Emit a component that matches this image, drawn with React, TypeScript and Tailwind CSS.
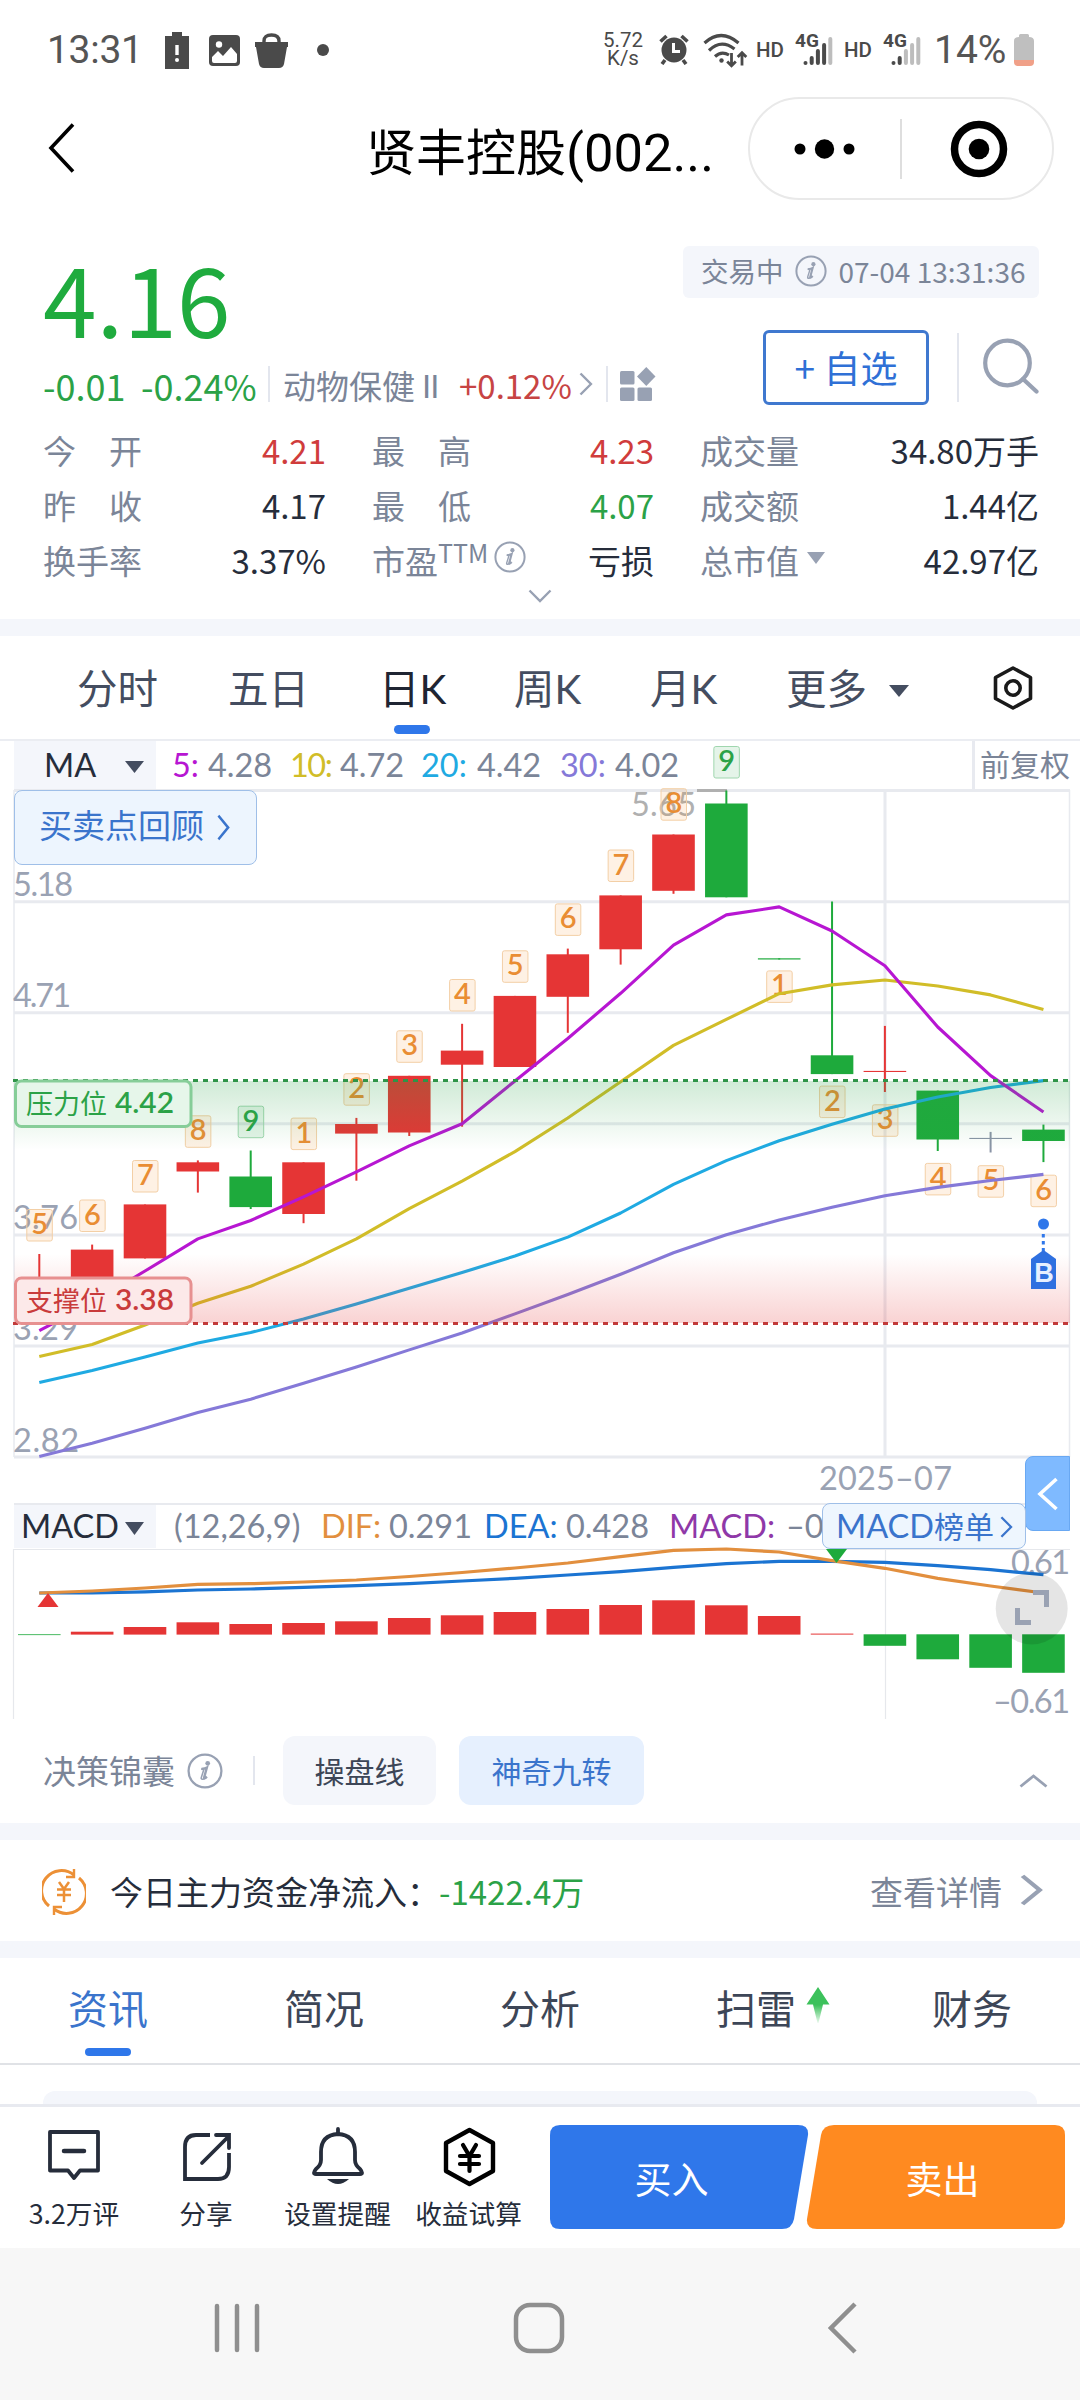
import type { ReactNode } from "react";

const UP = "#e53535";
const DOWN = "#1eaa3c";
const FLAT = "#8a94a6";

type Candle = {
  color: string;
  high: number;
  low: number;
  top: number;
  bottom: number;
  turn: string;
  turnY: number;
};

const candles: Candle[] = [
  { color: UP, high: 1254, low: 1300, top: 1290, bottom: 1300, turn: "5", turnY: 1209 },
  { color: UP, high: 1244.6, low: 1290, top: 1249.6, bottom: 1288, turn: "6", turnY: 1199.5 },
  { color: UP, high: 1204.4, low: 1258.4, top: 1204.4, bottom: 1258.4, turn: "7", turnY: 1160 },
  { color: UP, high: 1160.4, low: 1192.6, top: 1162.3, bottom: 1171.5, turn: "8", turnY: 1115.3 },
  { color: DOWN, high: 1150.5, low: 1209, top: 1176.5, bottom: 1207.1, turn: "9", turnY: 1105.7 },
  { color: UP, high: 1162.3, low: 1223.2, top: 1162.3, bottom: 1214, turn: "1", turnY: 1117.6 },
  { color: UP, high: 1117.9, low: 1180.7, top: 1124, bottom: 1133.6, turn: "2", turnY: 1073.2 },
  { color: UP, high: 1075.8, low: 1136, top: 1075.8, bottom: 1132.5, turn: "3", turnY: 1030.3 },
  { color: UP, high: 1023.8, low: 1126.7, top: 1050.6, bottom: 1064.7, turn: "4", turnY: 979 },
  { color: UP, high: 995.9, low: 1067, top: 995.9, bottom: 1067, turn: "5", turnY: 950.3 },
  { color: UP, high: 948.6, low: 1032.8, top: 954.3, bottom: 996.8, turn: "6", turnY: 903.4 },
  { color: UP, high: 895.4, low: 964.6, top: 895.4, bottom: 949.3, turn: "7", turnY: 849.5 },
  { color: UP, high: 834.5, low: 893.8, top: 834.5, bottom: 890.8, turn: "8", turnY: 788.2 },
  { color: DOWN, high: 790.5, low: 897.3, top: 803.5, bottom: 897.3, turn: "9", turnY: 746 },
  { color: DOWN, high: 958.3, low: 959.5, top: 958.3, bottom: 959.5, turn: "1", turnY: 970.4 },
  { color: DOWN, high: 901.5, low: 1074.1, top: 1055.3, bottom: 1074.1, turn: "2", turnY: 1085.6 },
  { color: UP, high: 1025.9, low: 1092, top: 1070.9, bottom: 1072, turn: "3", turnY: 1104.3 },
  { color: DOWN, high: 1090.6, low: 1151, top: 1090.6, bottom: 1139.5, turn: "4", turnY: 1162.9 },
  { color: FLAT, high: 1131.9, low: 1152.5, top: 1137.9, bottom: 1139, turn: "5", turnY: 1165.2 },
  { color: DOWN, high: 1124.6, low: 1162.1, top: 1129.6, bottom: 1141, turn: "6", turnY: 1174.7 },
];

const averages = [
  {
    color: "#8579d8",
    ys: [1456.6, 1443.2, 1428.3, 1412.6, 1399.2, 1383.2, 1367, 1349.9, 1333, 1313.9, 1294.5, 1274.3, 1252.8, 1234.8, 1219.9, 1207.3, 1195.8, 1187.4, 1180.5, 1174.4],
  },
  {
    color: "#1faae2",
    ys: [1382.4, 1370.5, 1357, 1343, 1332.6, 1318.9, 1303.9, 1288.2, 1272.6, 1256, 1237.1, 1213, 1184.3, 1160.6, 1140.7, 1124.2, 1108.9, 1097, 1087.5, 1080.6],
  },
  {
    color: "#d1bd28",
    ys: [1356.4, 1344.5, 1325, 1303.2, 1286.3, 1264.1, 1238.9, 1208.6, 1181.1, 1151.6, 1118, 1081.8, 1045.4, 1019.4, 993.7, 984.9, 980, 986, 994.9, 1009.4],
  },
  {
    color: "#b716d2",
    ys: [1330.7, 1303, 1271, 1238.9, 1220.5, 1196.8, 1171.9, 1145.9, 1123.7, 1081, 1038.5, 993.3, 945.1, 914.9, 906.9, 931, 965.8, 1027, 1075.6, 1112],
  },
];

const dea = [1593, 1593, 1591.8, 1590, 1589, 1587.3, 1585.7, 1583.7, 1581, 1578.3, 1575, 1571.7, 1567.3, 1563.7, 1561.3, 1561.3, 1562.3, 1565.7, 1569.7, 1574.7];
const dif = [1593, 1591, 1588, 1584.3, 1583.7, 1582, 1580, 1576.5, 1572.5, 1568, 1563, 1556.7, 1550.3, 1549, 1552, 1560.7, 1568.3, 1578.3, 1586, 1593];
const macdBars = [-0.8, 2.9, 7.6, 12.3, 10.6, 11.6, 13.3, 16.6, 19.3, 22.6, 25.6, 29.6, 34.3, 29.3, 18.6, 1, -11.5, -25, -33.5, -38.5];

const candleX = (i: number) => 39.3 + i * 52.85;
const toPoints = (ys: number[]) => ys.map((y, i) => `${candleX(i)},${y}`).join(" ");

function InfoIcon({ className }: { className: string }) {
  return (
    <svg className={className} viewBox="0 0 32 32" fill="none">
      <circle cx="16" cy="16" r="14.6" stroke="#98a1b3" strokeWidth="2" />
      <circle cx="18.4" cy="9.2" r="2.1" fill="#98a1b3" />
      <path d="M13 14.2c2-.4 3.5-.7 4.7-1.4l-2.5 9.1c-.2 1 .6 1 2.5-.9" stroke="#98a1b3" strokeWidth="2.1" />
      <path d="M12.6 14.3h2.5l-2.4 7.6c-.5 2 1.8 1.7 3.7.2" stroke="#98a1b3" strokeWidth="1.4" />
    </svg>
  );
}

function Caret({ className }: { className: string }) {
  return (
    <svg className={className} viewBox="0 0 20 13" preserveAspectRatio="none" fill="currentColor">
      <path d="M0 0h20L10 13z" />
    </svg>
  );
}

function Chevron({ className, width }: { className: string; width: number }) {
  return (
    <svg className={className} viewBox="0 0 14 26" preserveAspectRatio="none" fill="none" stroke="currentColor" strokeWidth={width}>
      <path d="M1.5 1.5 12 13 1.5 24.5" />
    </svg>
  );
}

function Signal({ strong }: { strong: number }) {
  return (
    <div className="relative h-9 w-10">
      <span className="absolute left-0 top-0 text-[19px] font-bold leading-5">4G</span>
      <svg className="absolute bottom-0 left-2 h-9 w-8" viewBox="0 0 32 36">
        {[4, 9, 16, 22, 28].map((h, i) => (
          <rect key={h} x={0.5 + i * 6.2} y={34 - h} width="4" height={h} rx="2" fill={i < strong ? "#4a4a4a" : "#bdbdbd"} />
        ))}
      </svg>
    </div>
  );
}

function StatusBar() {
  return (
    <div className="flex h-[97px] items-start pl-[47px] pr-[46px] font-['Roboto'] text-[#4a4a4a]">
      <div className="mt-[27px] w-[118px] text-[39px] leading-[46px] tracking-[-0.3px] text-[#555]">13:31</div>
      <svg className="mt-8 h-[37px] w-6" viewBox="0 0 24 37">
        <path d="M0 4h7V0h10v4h7v33H0z" fill="#4a4a4a" />
        <path d="M12 13v10" stroke="#fff" strokeWidth="3.4" />
        <circle cx="12" cy="28" r="2" fill="#fff" />
      </svg>
      <svg className="ml-5 mt-[35px] h-[31px] w-[31px]" viewBox="0 0 31 31">
        <rect width="31" height="31" rx="4" fill="#4a4a4a" />
        <circle cx="10" cy="9.5" r="3.2" fill="#fff" />
        <path d="M3 26v-4l6-6 5 5 8-9 6 7v7q0 2-2 2H5q-2 0-2-2z" fill="#fff" />
      </svg>
      <svg className="ml-[15px] mt-[33px] h-[35px] w-[33px]" viewBox="0 0 33 35">
        <path d="M9 11V8q0-6 7.5-6T24 8v3" fill="none" stroke="#4a4a4a" strokeWidth="3.4" />
        <path d="M0 9h33v5h-1l-3 17q-1 4-5 4H9q-4 0-5-4L1 14H0z" fill="#4a4a4a" />
      </svg>
      <span className="ml-[29px] mt-11 h-3 w-3 rounded-full bg-[#4a4a4a]" />
      <div className="flex-1" />
      <div className="mt-[31px] w-[42px] text-center text-[20.5px] leading-[18px]">
        5.72
        <br />
        K/s
      </div>
      <svg className="ml-[15px] mt-[34px] h-[31px] w-[30px]" viewBox="0 0 30 31">
        <circle cx="15" cy="16" r="12.5" fill="#4a4a4a" />
        <path d="M1.5 7.5 7.5 2M28.5 7.5 22.5 2M6 26l-3 4M24 26l3 4" stroke="#4a4a4a" strokeWidth="3.6" />
        <path d="M14.5 9v8.5H21" fill="none" stroke="#fff" strokeWidth="3" />
      </svg>
      <svg className="ml-[14px] mt-8 h-9 w-[45px]" viewBox="0 0 45 36" fill="none" stroke="#4a4a4a">
        <path d="M1.5 11q16.5-15 34 0M6 18.5q12-12 25.5-1.5M12 24.5q6.5-6 14-1.5" strokeWidth="3.2" />
        <circle cx="18.5" cy="28.5" r="2.2" fill="#4a4a4a" stroke="none" />
        <path d="M28.5 21v13M24.2 29.5l4.3 4.3 4.3-4.3M39 33.5V20.5M34.7 25l4.3-4.3 4.3 4.3" strokeWidth="2.8" />
      </svg>
      <span className="ml-2 mt-[38px] w-[39px] text-[20.5px] font-medium leading-6">HD</span>
      <div className="mt-[31px]">
        <Signal strong={4} />
      </div>
      <span className="ml-[9px] mt-[38px] w-[39px] text-[20.5px] font-medium leading-6">HD</span>
      <div className="mt-[31px]">
        <Signal strong={2} />
      </div>
      <span className="ml-[11px] mt-[27px] w-[80px] text-[39px] leading-[46px] text-[#555]">14%</span>
      <svg className="mt-[34px] h-8 w-5" viewBox="0 0 20 32">
        <path d="M5 3V1.5Q5 0 6.5 0h7Q15 0 15 1.5V3q5 0 5 4v20H0V7q0-4 5-4z" fill="#bfbfbf" />
        <path d="M0 26h20v2q0 4-4 4H4q-4 0-4-4z" fill="#f0a088" />
      </svg>
    </div>
  );
}

function TitleBar() {
  return (
    <div className="flex h-[149px] items-start pl-12 pr-[26px]">
      <svg className="mt-[26px] h-[50px] w-7" viewBox="0 0 28 50" fill="none" stroke="#000" strokeWidth="3.6">
        <path d="M25 1.5 3 25l22 23.5" />
      </svg>
      <h1 className="ml-[290px] mt-5 w-[382px] whitespace-nowrap font-['Roboto','Noto_Sans_CJK_SC',sans-serif] text-[50px] leading-[72px] text-black">
        贤丰控股<span className="text-[52.5px]">(002...</span>
      </h1>
      <div className="flex h-[103px] w-[306px] items-center rounded-full border-2 border-[#e9e9e9]">
        <svg className="ml-[43px] h-6 w-[66px]" viewBox="0 0 66 24">
          <circle cx="7" cy="12" r="5.5" />
          <circle cx="31.5" cy="12" r="9.7" />
          <circle cx="56" cy="12" r="5.5" />
        </svg>
        <span className="ml-[41px] h-[60px] w-0.5 bg-[#dedede]" />
        <svg className="ml-12 h-[58px] w-[58px]" viewBox="0 0 58 58">
          <circle cx="29" cy="29" r="24.5" fill="none" stroke="#000" strokeWidth="7.5" />
          <circle cx="29" cy="29" r="10.3" />
        </svg>
      </div>
    </div>
  );
}

function Quote() {
  return (
    <div className="flex h-[185px] justify-between pl-[43px] pr-[41px]">
      <div>
        <div className="mt-1 h-[101px] text-[96.5px] leading-[92px] text-[#1fab3e]">4.16</div>
        <div className="mt-[9px] flex h-[54px] items-center whitespace-nowrap text-[33px]">
          <span className="w-[98px] pb-[5px] text-[36px] text-[#2ba247]">-0.01</span>
          <span className="w-[127px] pb-[5px] text-[36px] text-[#2ba247]">-0.24%</span>
          <span className="-mt-1.5 h-9 w-0.5 bg-[#e3e6ee]" />
          <span className="ml-[13px] w-[139px] pb-0.5 text-[#7b8598]">动物保健</span>
          <span className="w-[39px] font-['Liberation_Sans'] tracking-[-1px] text-[#7b8598]">II</span>
          <span className="-ml-0.5 w-[120px] pb-0.5 text-[#c74444]">+0.12%</span>
          <Chevron className="-mt-1.5 h-6 w-[14px] text-[#98a1b3]" width={2.4} />
          <span className="-mt-1.5 ml-[13px] h-9 w-0.5 bg-[#e3e6ee]" />
          <svg className="-mt-1.5 ml-3 h-9 w-9" viewBox="0 0 36 36" fill="#98a1b3">
            <rect x="0" y="5" width="14.5" height="13.5" rx="1.5" />
            <rect x="0" y="21.5" width="14.5" height="13.5" rx="1.5" />
            <rect x="17.5" y="21.5" width="14.5" height="13.5" rx="1.5" />
            <path d="m26.3 1 9.2 9.5-9.2 9.5-9.3-9.5z" />
          </svg>
        </div>
      </div>
      <div className="flex flex-col items-end">
        <div className="flex h-[52px] w-[356px] items-center whitespace-nowrap rounded-md bg-[#f4f6fb] pb-0.5 pl-[18px] text-[27.5px] text-[#7b8598]">
          交易中
          <InfoIcon className="ml-[11px] h-8 w-8" />
          <span className="ml-3 text-[28px]">07-04 13:31:36</span>
        </div>
        <div className="mt-8 flex items-center">
          <button className="h-[75px] w-[166px] whitespace-nowrap rounded-md border-[3px] border-[#3f78cf] text-[37px] leading-[69px] text-[#2f70d6]" type="button">
            + 自选
          </button>
          <span className="ml-7 h-[69px] w-0.5 bg-[#e3e6ee]" />
          <svg className="-mt-1 ml-[22px] h-[60px] w-[58px]" viewBox="0 0 58 60" fill="none" stroke="#98a1b3" strokeWidth="4.2">
            <circle cx="26.5" cy="27" r="22.3" />
            <path d="m42 43 13.5 12.5" strokeLinecap="round" />
          </svg>
        </div>
      </div>
    </div>
  );
}

function Stat({ label, value, color = "text-[#262d3b]" }: { label: ReactNode; value: string; color?: string }) {
  return (
    <div className="flex h-[55px] items-center justify-between whitespace-nowrap">
      <span className="flex items-center whitespace-pre text-[#7b8598]">{label}</span>
      <span className={color}>{value}</span>
    </div>
  );
}

function Stats() {
  return (
    <div className="flex h-[188px] flex-col">
      <div className="-mt-[9px] grid grid-cols-[283px_282px_339px] gap-x-[46px] pl-[43px] text-[33px] leading-[48px]">
        <Stat label="今　开" value="4.21" color="text-[#d03c3c]" />
        <Stat label="最　高" value="4.23" color="text-[#d03c3c]" />
        <Stat label="成交量" value="34.80万手" />
        <Stat label="昨　收" value="4.17" />
        <Stat label="最　低" value="4.07" color="text-[#2ba247]" />
        <Stat label="成交额" value="1.44亿" />
        <Stat label="换手率" value="3.37%" />
        <Stat
          label={
            <>
              市盈
              <span className="-mt-4 text-[25px] leading-8">TTM</span>
              <InfoIcon className="-mt-1.5 ml-1.5 h-8 w-8" />
            </>
          }
          value="亏损"
        />
        <Stat
          label={
            <>
              总市值
              <Caret className="-mt-1 ml-2 h-3 w-[18px] text-[#98a1b3]" />
            </>
          }
          value="42.97亿"
        />
      </div>
      <svg className="mx-auto mt-px h-4 w-6" viewBox="0 0 24 16" fill="none" stroke="#98a1b3" strokeWidth="2.4">
        <path d="m1.5 2.5 10.5 10.5 10.5-10.5" />
      </svg>
    </div>
  );
}

function PeriodTabs() {
  return (
    <div className="flex h-[105px] items-start whitespace-nowrap border-b-2 border-[#ebedf2] pl-[77px] pt-6 font-['Lato','Noto_Sans_CJK_SC',sans-serif] text-[40.5px] leading-[58px] text-[#444d60]">
      <span className="w-[151px]">分时</span>
      <span className="w-[151px]">五日</span>
      <span className="flex w-[135px] flex-col text-[#1f2533]">
        日K
        <span className="ml-[15px] mt-[7px] h-[9px] w-9 rounded-full bg-[#2f77ea]" />
      </span>
      <span className="w-[136px]">周K</span>
      <span className="w-[136px]">月K</span>
      <span className="flex w-[205px] items-center">
        更多
        <Caret className="ml-[22px] mt-1 h-3 w-5" />
      </span>
      <svg className="mt-[5px] h-[46px] w-[42px]" viewBox="0 0 42 46" fill="none" stroke="#1a1a1a" strokeWidth="3.6">
        <path d="M22 3 39.5 12.5v21L22 43 4.5 33.500v-21z" strokeLinejoin="round" />
        <circle cx="22" cy="23" r="7.2" />
      </svg>
    </div>
  );
}

const maLegend = [
  { name: "5:", value: "4.28", color: "text-[#b716d2]", nameWidth: "w-[36px]", valueWidth: "w-[82px]" },
  { name: "10:", value: "4.72", color: "tracking-[-1.5px] text-[#d1bd28]", nameWidth: "w-[50px]", valueWidth: "w-[81px]" },
  { name: "20:", value: "4.42", color: "text-[#1faae2]", nameWidth: "w-[56px]", valueWidth: "w-[83px]" },
  { name: "30:", value: "4.02", color: "text-[#8579d8]", nameWidth: "w-[55px]", valueWidth: "w-[84px]" },
];

function MaRow() {
  return (
    <div className="flex h-12 items-center whitespace-nowrap pl-[14px] font-['Lato'] text-[32.5px]">
      <div className="flex h-12 w-[142px] items-center bg-[#f4f6fb] pl-[30px] text-[#262d3b]">
        MA
        <Caret className="ml-auto mr-3 mt-1 h-3 w-[19px] text-[#444d60]" />
      </div>
      <div className="ml-4 flex w-[800px] text-[#7b8598]">
        {maLegend.map((m) => (
          <div className="flex" key={m.name}>
            <span className={`${m.nameWidth} ${m.color}`}>{m.name}</span>
            <span className={m.valueWidth}>{m.value}</span>
          </div>
        ))}
      </div>
      <div className="h-12 border-l-[3px] border-[#e8eaf0] pl-[5px] font-['Noto_Sans_CJK_SC'] text-[30px] leading-[44px] text-[#7b8598]">前复权</div>
    </div>
  );
}

function TurnBadge({ x, y, text }: { x: number; y: number; text: string }) {
  const green = text === "9";
  return (
    <g>
      <rect x={x - 12.5} y={y + 0.5} width="25.5" height="31.5" rx="2" fill={green ? "#2ba247" : "#f58a1f"} fillOpacity="0.12" stroke={green ? "#9fd6ae" : "#f3cfa6"} />
      <text x={x + 0.3} y={y + 25} textAnchor="middle" fontSize="29" fontWeight="600" fill={green ? "#2ba247" : "#e98d33"}>
        {text}
      </text>
    </g>
  );
}

function LevelTag({ y, text, value, ink, border, fill }: { y: number; text: string; value: string; ink: string; border: string; fill: string }) {
  return (
    <g>
      <rect x="15.5" y={y} width="175.5" height="45.5" rx="6" fill={fill} stroke={border} strokeWidth="3" />
      <text x="26" y={y + 32.5} fontSize="27" fill={ink} fontFamily="Noto Sans CJK SC">
        {text}
      </text>
      <text x="115" y={y + 32} fontSize="28" fontWeight="600" fill={ink} textLength="59" lengthAdjust="spacingAndGlyphs">
        {value}
      </text>
    </g>
  );
}

function KChart() {
  return (
    <div className="relative">
      <svg className="block h-[714px] w-full overflow-visible font-['Lato']" viewBox="0 789 1080 714">
        <defs>
          <linearGradient id="pressure" x1="0" y1="0" x2="0" y2="1">
            <stop offset="0" stopColor="#2ba247" stopOpacity="0.22" />
            <stop offset="1" stopColor="#2ba247" stopOpacity="0" />
          </linearGradient>
          <linearGradient id="support" x1="0" y1="0" x2="0" y2="1">
            <stop offset="0" stopColor="#e53535" stopOpacity="0" />
            <stop offset="1" stopColor="#e53535" stopOpacity="0.22" />
          </linearGradient>
        </defs>
        <g stroke="#e8eaef" strokeWidth="3">
          {[790.5, 901.7, 1012.8, 1123.8, 1235, 1346, 1457].map((y) => (
            <path key={y} d={`M14 ${y}H1070`} />
          ))}
          <path d="M885 790V1457" />
          <path d="M14 790V1457M1069.5 790V1457" strokeWidth="1.5" />
        </g>
        <g fontSize="32.5" fill="#9aa2b3">
          <text x="13" y="896" textLength="60">5.18</text>
          <text x="13" y="1007" textLength="58">4.71</text>
          <text x="13" y="1229" textLength="65">3.76</text>
          <text x="13" y="1340" textLength="65">3.29</text>
          <text x="13" y="1452" textLength="66">2.82</text>
          <text x="885.5" y="1490" textAnchor="middle" textLength="133">2025–07</text>
        </g>
        <path d="M697 790.5H727" stroke="#b0b0b0" strokeWidth="3" />
        <text x="631" y="816" fontSize="32.5" fill="#b0b0b0" textLength="65">5.65</text>
        {candles.map((c, i) => (
          <g key={i}>
            <path d={`M${candleX(i)} ${c.high}V${c.low}`} stroke={c.color} strokeWidth="2" />
            <rect x={candleX(i) - 21.3} y={c.top} width="42.6" height={c.bottom - c.top} fill={c.color} />
            <TurnBadge x={candleX(i)} y={c.turnY} text={c.turn} />
          </g>
        ))}
        {averages.map((a) => (
          <polyline key={a.color} points={toPoints(a.ys)} fill="none" stroke={a.color} strokeWidth="3.1" strokeLinejoin="round" />
        ))}
        <rect x="14" y="1081" width="1056" height="69" fill="url(#pressure)" />
        <rect x="14" y="1254" width="1056" height="69" fill="url(#support)" />
        <path d="M13 1080.5H1070" stroke="#2f9448" strokeWidth="3" strokeDasharray="5 5" />
        <path d="M13 1323.5H1070" stroke="#c23a3a" strokeWidth="3" strokeDasharray="5 5" />
        <LevelTag y={1081} text="压力位" value="4.42" ink="#2ba247" border="#86cd98" fill="#e6f6ea" />
        <LevelTag y={1278} text="支撑位" value="3.38" ink="#c93b3b" border="#e79090" fill="#fce9e9" />
        <circle cx="1043.5" cy="1224" r="5.5" fill="#2f77ea" />
        <path d="M1043.3 1234V1252" stroke="#2f77ea" strokeWidth="3" strokeDasharray="3.5 3.5" />
        <path d="m1031 1259 12.5-9 12.5 9v30h-25z" fill="#2f70e0" />
        <text x="1044" y="1282" textAnchor="middle" fontSize="27" fontWeight="700" fill="#e6efff" fontFamily="Liberation Sans">B</text>
      </svg>
      <button
        className="absolute left-[14px] top-px flex h-[75px] w-[243px] items-center whitespace-nowrap rounded-lg border border-[#9fbfe8] bg-[#edf5fe] pb-[5px] pl-6 text-[33px] text-[#3a74cc]"
        type="button"
      >
        买卖点回顾
        <Chevron className="ml-[13px] mt-1 h-[27px] w-[13px]" width={2.6} />
      </button>
      <button className="absolute right-2.5 top-[667px] z-10 flex h-[75px] w-[45px] items-center justify-center rounded-l-lg border border-[#69a8f2] bg-[#7fbaff]" type="button">
        <svg className="h-9 w-6" viewBox="0 0 24 36" fill="none" stroke="#fff" strokeWidth="3.6">
          <path d="M20.5 3 4 18l16.5 15" />
        </svg>
      </button>
    </div>
  );
}

function MacdRow() {
  return (
    <div className="relative flex h-[46px] items-center whitespace-nowrap pl-[14px] font-['Lato'] text-[32.5px] text-[#7b8598]">
      <div className="flex h-[43px] w-[142px] items-center bg-[#f4f6fb] pl-[7px] text-[#262d3b]">
        MACD
        <Caret className="ml-auto mr-3 mt-1 h-[13px] w-[19px] text-[#444d60]" />
      </div>
      <div className="ml-[18px] flex">
        <span className="w-[147px]">(12,26,9)</span>
        <span className="w-[68px] text-[#e28f3e]">DIF:</span>
        <span className="w-[95px]">0.291</span>
        <span className="w-[82px] text-[#1b74d2]">DEA:</span>
        <span className="w-[103px]">0.428</span>
        <span className="w-[117px] text-[#8f38a8]">MACD:</span>
        <span>–0</span>
      </div>
      <div className="absolute left-[14px] right-2.5 top-0 h-0.5 bg-[#e8eaef]" />
      <button className="absolute left-[822px] top-0 z-10 flex h-[46px] w-[204px] items-center rounded-lg border border-[#9fbfe8] bg-[#eef6fe] pl-[13px] text-[#3a74cc]" type="button">
        MACD
        <span className="-mt-0.5 font-['Noto_Sans_CJK_SC'] text-[30px] leading-10">榜单</span>
        <Chevron className="ml-1.5 mt-0.5 h-[22px] w-[13px]" width={2.4} />
      </button>
    </div>
  );
}

function MacdChart() {
  return (
    <svg className="block h-[170px] w-full overflow-visible font-['Lato']" viewBox="0 1549 1080 170">
      <path d="M13.5 1719V1549.5H1070M885.5 1549V1719" fill="none" stroke="#e6e8ec" strokeWidth="1.2" />
      {macdBars.map((h, i) => (
        <rect key={i} x={candleX(i) - 21.3} y={h > 0 ? 1634.6 - h : 1634.3} width="42.6" height={Math.abs(h)} fill={h > 0 ? UP : DOWN} />
      ))}
      <g fontSize="32.5" fill="#9aa2b3">
        <text x="1070" y="1574" textAnchor="end" textLength="59">0.61</text>
        <text x="1070" y="1713" textAnchor="end" textLength="77">–0.61</text>
      </g>
      <polyline points={toPoints(dea)} fill="none" stroke="#1b74d2" strokeWidth="3.2" />
      <polyline points={toPoints(dif)} fill="none" stroke="#e28f3e" strokeWidth="3.2" />
      <path d="m48 1593 10.5 14h-21z" fill={UP} />
      <path d="m836.5 1563-10.5-14h21z" fill={DOWN} />
      <circle cx="1031.7" cy="1608.5" r="36" fill="#000" fillOpacity="0.1" />
      <path d="M1033 1592.5h13.5V1607M1017.5 1608v14.5H1031" fill="none" stroke="#9aa2b3" strokeWidth="5" />
    </svg>
  );
}

function Strategy() {
  return (
    <div className="flex h-[104px] items-center whitespace-nowrap pb-px pl-[43px] text-[33px] text-[#7b8598]">
      决策锦囊
      <InfoIcon className="ml-3 h-9 w-9" />
      <span className="ml-[30px] h-[29px] w-0.5 bg-[#e3e6ee]" />
      <button className="ml-7 h-[69px] w-[153px] rounded-xl bg-[#f4f6fb] text-[30px] text-[#3d4657]" type="button">
        操盘线
      </button>
      <button className="ml-[23px] h-[69px] w-[185px] rounded-xl bg-[#e6f0fe] text-[30px] text-[#3a74cc]" type="button">
        神奇九转
      </button>
      <svg className="ml-auto mr-8 mt-[21px] h-4 w-[30px]" viewBox="0 0 30 16" fill="none" stroke="#98a1b3" strokeWidth="2.8">
        <path d="M2.5 13.5 15.5 3l13 10.5" />
      </svg>
    </div>
  );
}

function CapitalFlow() {
  return (
    <div className="flex h-[101px] items-center whitespace-nowrap pl-[42px] pr-[37px] pt-0.5 text-[33px]">
      <svg className="h-12 w-11" viewBox="0 0 44 48" fill="none" stroke="#ec9036" strokeWidth="3">
        <path d="M7 38A19.5 19.5 0 0 1 32 7M37 10A19.5 19.5 0 0 1 12 41" />
        <path d="M32 1v8h-8M12 47v-8h8" strokeWidth="2.4" />
        <path d="m17 14 5 7 5-7M15 21.5h14M15 27h14M22 21v13" strokeWidth="2.5" />
      </svg>
      <span className="ml-6 text-[#262d3b]">今日主力资金净流入：</span>
      <span className="-ml-px text-[#2ba247]">-1422.4万</span>
      <span className="ml-auto text-[#7b8598]">查看详情</span>
      <Chevron className="-mt-1 ml-[18px] h-8 w-[23px] text-[#98a1b3]" width={2.9} />
    </div>
  );
}

function InfoTabs() {
  return (
    <div className="grid h-[107px] grid-cols-5 border-b-2 border-[#e0e2e6] text-[40px] leading-[58px] text-[#3d4657]">
      {["资讯", "简况", "分析", "扫雷", "财务"].map((tab, i) => (
        <div className={`flex flex-col items-center pt-5 ${i === 0 ? "text-[#3a74cc]" : ""}`} key={tab}>
          <span className="relative">
            {tab}
            {tab === "扫雷" && (
              <svg className="absolute -right-[34px] top-[9px] h-9 w-6" viewBox="0 0 24 36">
                <defs>
                  <linearGradient id="rise" x1="0" y1="0" x2="0" y2="1">
                    <stop offset="0.5" stopColor="#3cc15b" />
                    <stop offset="1" stopColor="#3cc15b" stopOpacity="0.1" />
                  </linearGradient>
                </defs>
                <path d="m12 0 11.5 17.5H17L12.5 36h-1L7 17.5H.5z" fill="url(#rise)" />
              </svg>
            )}
          </span>
          {i === 0 && <span className="mt-3 h-2 w-[46px] rounded-full bg-[#2f77ea]" />}
        </div>
      ))}
    </div>
  );
}

function ActionItem({ label, children, width }: { label: string; children: ReactNode; width: string }) {
  return (
    <div className={`flex flex-col items-center ${width}`}>
      <svg className="mt-[18px] h-[62px] w-[60px]" viewBox="0 0 60 62" fill="none" stroke="#262d3b" strokeWidth="3.8">
        {children}
      </svg>
      <span className="mt-[9px] whitespace-nowrap text-[26.7px] leading-[34px] text-[#262d3b]">{label}</span>
    </div>
  );
}

function ActionBar() {
  return (
    <div className="flex h-[144px] border-t-[3px] border-[#e8eaf0] pl-2">
      <ActionItem label="3.2万评" width="w-[132px]">
        <path d="M6 7h48v38.5H36L30 53l-6-7.5H6z" strokeLinejoin="round" />
        <path d="M20 26h20" strokeWidth="4.5" strokeLinecap="round" />
      </ActionItem>
      <ActionItem label="分享" width="w-[132px]">
        <path d="M34 10H20Q9 10 9 22v32h33q11 0 11-12V28" />
        <path d="M26 38 52 12M40 10h13v13" strokeLinecap="round" />
      </ActionItem>
      <ActionItem label="设置提醒" width="w-[131px]">
        <path d="M30 9q-17 1-17 18v8q0 5-5 9-4 5 0 5h44q4 0 0-5-5-4-5-9v-8Q47 10 30 9zM30 4v4" strokeLinecap="round" />
        <path d="M19 54h22q-11 10-22 0z" fill="#262d3b" stroke="none" />
      </ActionItem>
      <ActionItem label="收益试算" width="w-[131px]">
        <path d="M30.5 5 54 18v28L30.5 59 7 46V18z" stroke="#000" strokeWidth="4.4" strokeLinejoin="round" />
        <path d="m24 20 6.5 11L37 20M21 31h19M21 39h19M30.5 31v15" stroke="#000" strokeWidth="4.2" strokeLinecap="round" />
      </ActionItem>
      <div className="relative ml-4 mt-[18px] h-[104px] w-[515px]">
        <svg className="h-full w-full" viewBox="0 0 515 104">
          <path d="M10 0h238q11 0 10 10l-14 84q-2 10-12 10H10Q0 104 0 94V10Q0 0 10 0z" fill="#2f77ea" />
          <path d="M284 0h221q10 0 10 10v84q0 10-10 10H267q-11 0-10-10l14-84q2-10 13-10z" fill="#ff8a20" />
        </svg>
        <div className="absolute inset-0 grid grid-cols-[243px_1fr] text-center text-[37px] leading-[106px] text-white">
          <span>买入</span>
          <span className="pl-[27px]">卖出</span>
        </div>
      </div>
    </div>
  );
}

function NavBar() {
  return (
    <div className="flex h-[152px] items-start bg-[#f7f7f7] pl-[214px] pt-[54px] text-[#8f8f8f]">
      <svg className="h-[52px] w-12" viewBox="0 0 48 52" stroke="currentColor" strokeWidth="4.5" strokeLinecap="round">
        <path d="M3 4v44M23 4v44M43 4v44" />
      </svg>
      <svg className="ml-[251px] h-[52px] w-[52px]" viewBox="0 0 52 52" fill="none" stroke="currentColor" strokeWidth="4.5">
        <rect x="3" y="3" width="46" height="46" rx="14" />
      </svg>
      <svg className="ml-[263px] h-[52px] w-[30px]" viewBox="0 0 30 52" fill="none" stroke="currentColor" strokeWidth="4.5">
        <path d="M27 2 3 26l24 24" />
      </svg>
    </div>
  );
}

export default function App() {
  return (
    <div className="h-[2400px] w-[1080px] overflow-hidden bg-white font-['Noto_Sans_CJK_SC',sans-serif]">
      <StatusBar />
      <TitleBar />
      <Quote />
      <Stats />
      <div className="h-[17px] bg-[#f4f6fb]" />
      <PeriodTabs />
      <MaRow />
      <KChart />
      <MacdRow />
      <MacdChart />
      <Strategy />
      <div className="h-[17px] bg-[#f4f6fb]" />
      <CapitalFlow />
      <div className="h-[17px] bg-[#f4f6fb]" />
      <InfoTabs />
      <div className="h-[39px] px-[43px] pt-[26px]">
        <div className="h-[13px] rounded-t-xl bg-[#f4f6fb]" />
      </div>
      <ActionBar />
      <NavBar />
    </div>
  );
}
